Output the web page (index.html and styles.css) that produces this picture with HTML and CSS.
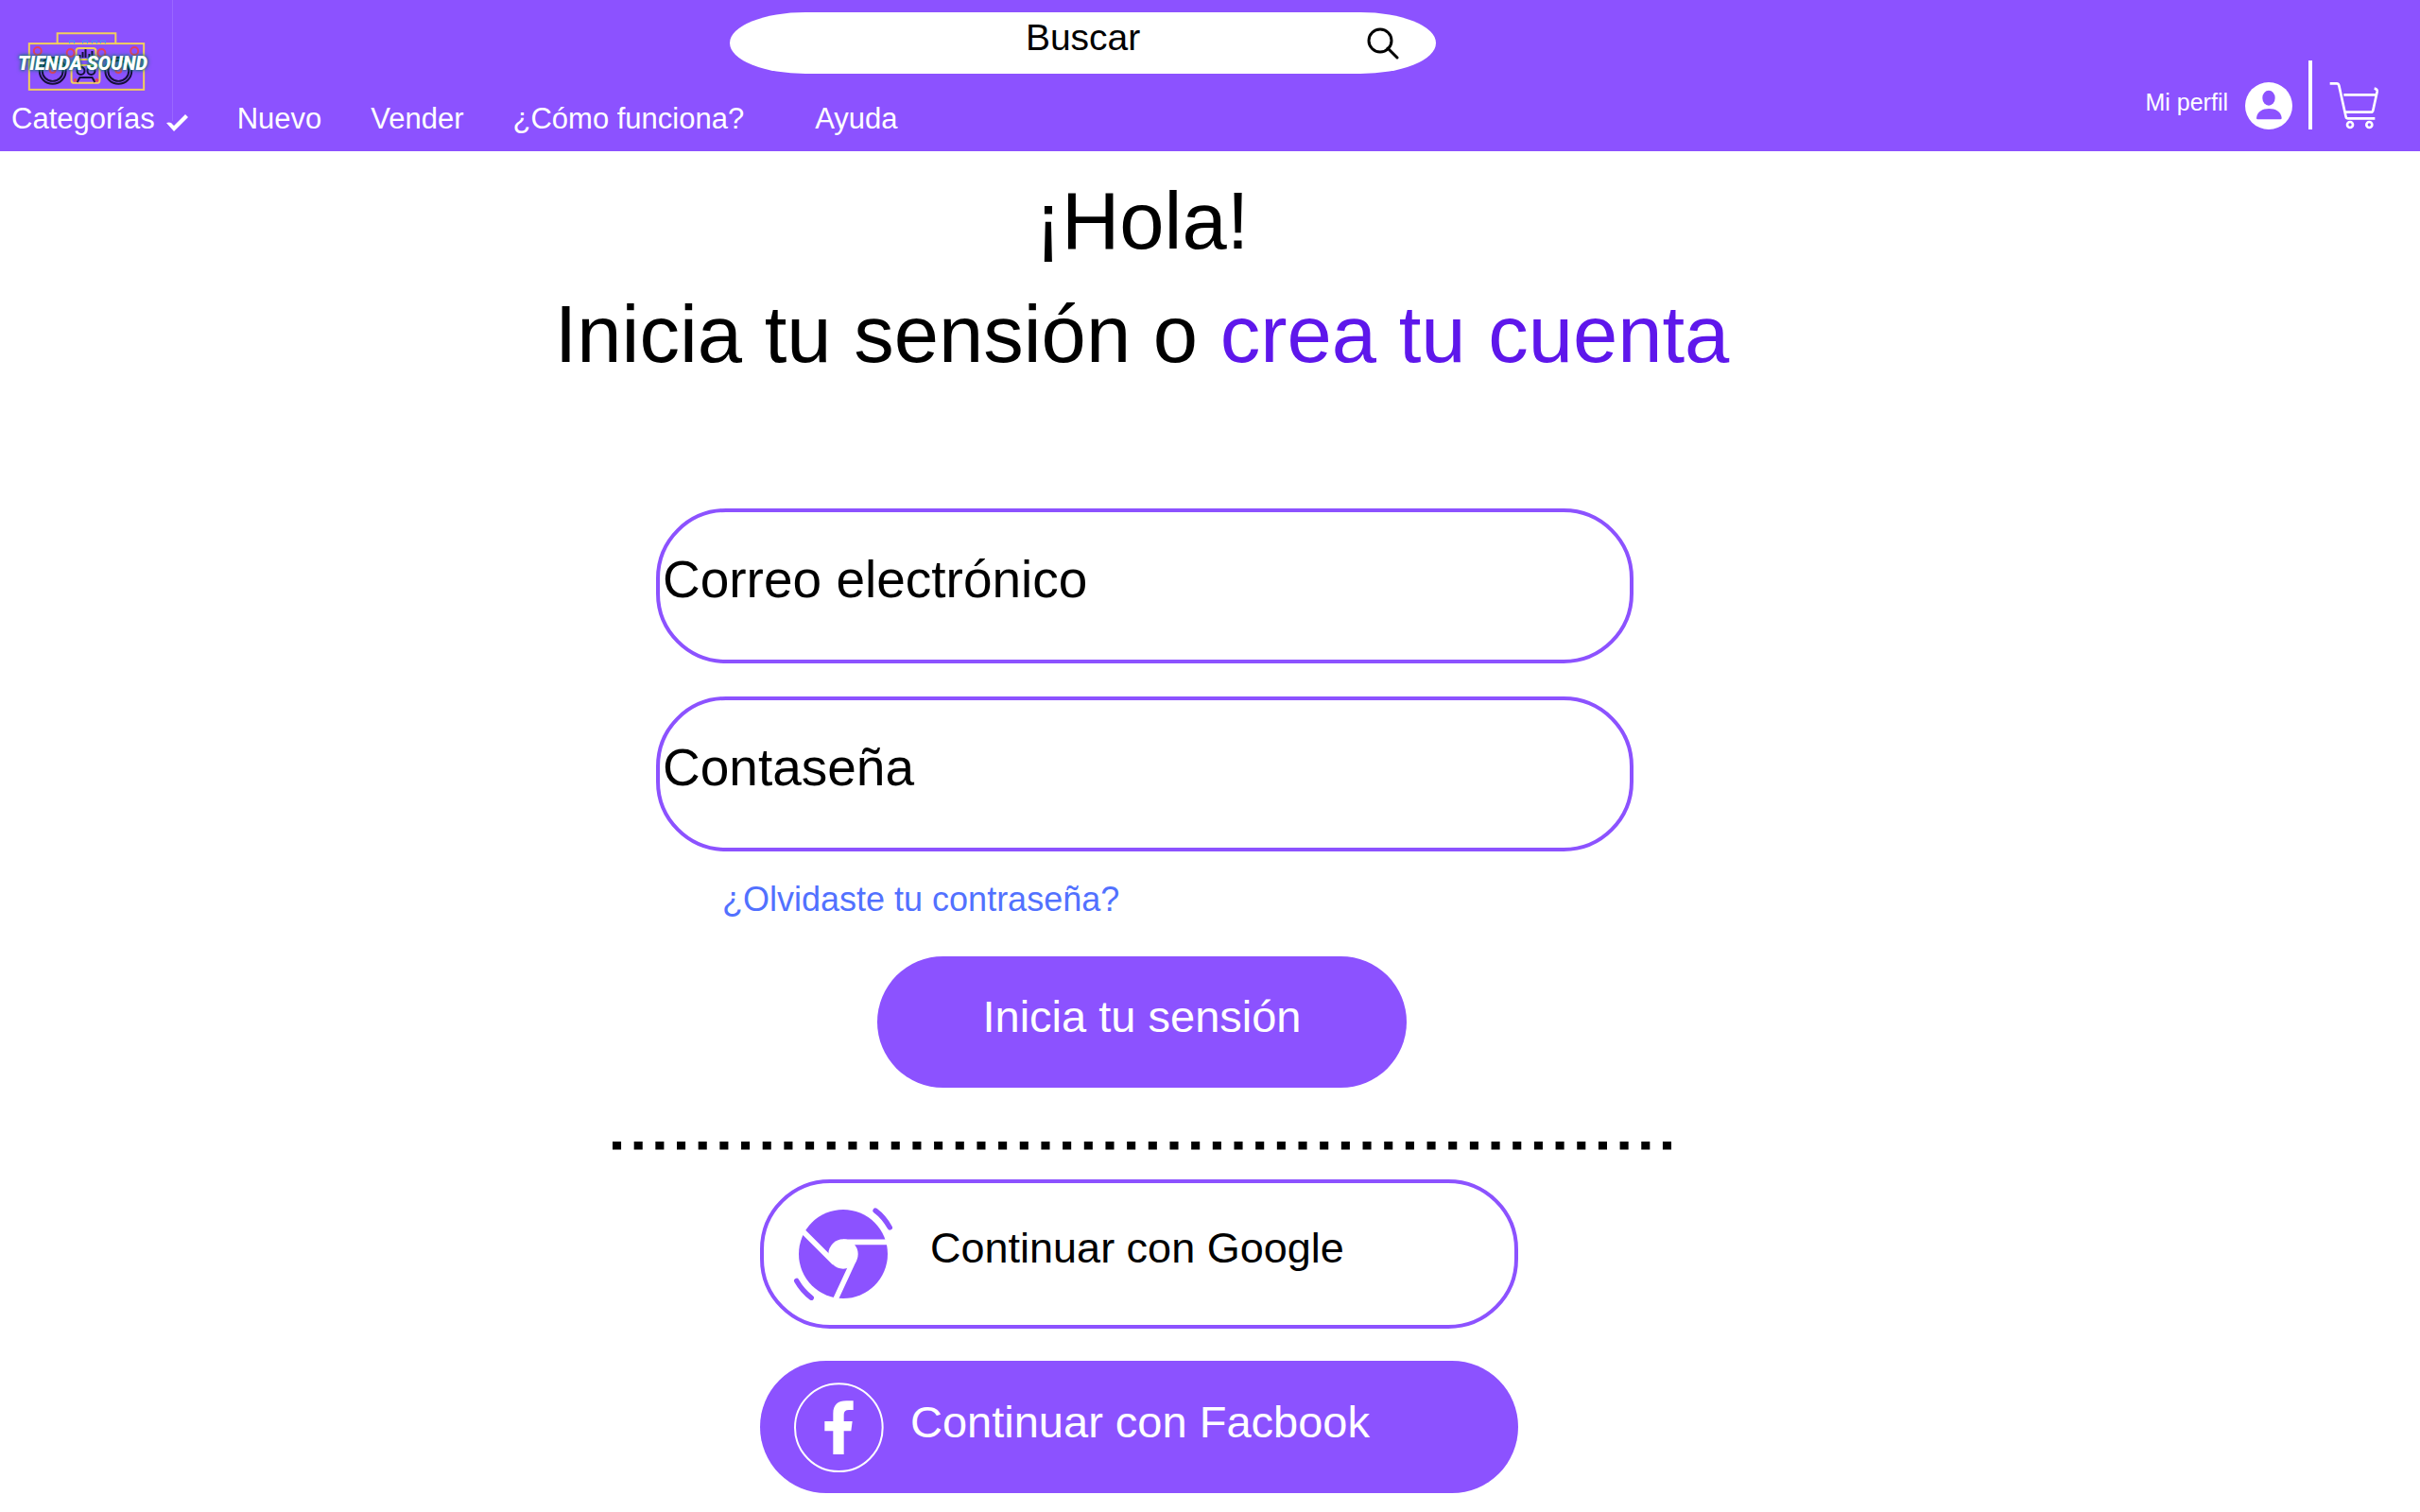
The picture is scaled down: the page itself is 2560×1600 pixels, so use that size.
FILE: index.html
```html
<!DOCTYPE html>
<html lang="es">
<head>
<meta charset="utf-8">
<meta name="viewport" content="width=device-width, initial-scale=1">
<title>Tienda Sound</title>
<link rel="stylesheet" href="styles.css">
</head>
<body>
<header class="header">
  <a class="logo" href="#">
    <svg class="logo-art" viewBox="0 0 183 128" role="img" aria-label="Tienda Sound">
      <g class="logo-frame">
        <path d="M61 46V35H123V46"/>
        <rect x="31" y="46" width="122" height="49"/>
        <rect x="81" y="51" width="21" height="12" rx="3"/>
        <rect x="76" y="69" width="30" height="19" rx="3"/>
      </g>
      <path class="logo-cyan" d="M74 46V43H79V46M88 46V43H93V46M98 46V43H103V46M107 46V43H112V46"/>
      <g class="logo-black">
        <circle cx="56" cy="75" r="14"/>
        <circle cx="126" cy="75" r="14"/>
        <circle cx="56" cy="75" r="11"/>
        <circle cx="126" cy="75" r="11"/>
        <circle cx="86" cy="75" r="4"/>
        <circle cx="97" cy="75" r="4"/>
        <path d="M82 87L85 82H98L101 87M85 61V58M88 61V55M91 61V52M95 61V57M98 61V54"/>
      </g>
      <g class="logo-red">
        <circle cx="40" cy="54" r="4"/>
        <circle cx="75" cy="56" r="4"/>
        <circle cx="108" cy="56" r="4"/>
        <circle cx="143" cy="54" r="4"/>
        <circle cx="56" cy="74" r="3"/>
        <circle cx="126" cy="74" r="3"/>
        <circle cx="80" cy="85" r="1"/>
        <circle cx="103" cy="85" r="1"/>
      </g>
      <text class="logo-text" x="88" y="74" text-anchor="middle">TIENDA SOUND</text>
    </svg>
  </a>

  <form class="search">
    <input class="search-input" type="search" placeholder="Buscar" aria-label="Buscar">
    <button class="search-button" type="submit" aria-label="Buscar">
      <svg class="search-icon" viewBox="0 0 34 34" aria-hidden="true">
        <circle cx="14" cy="14" r="12"/>
        <path d="M22 22L32 32"/>
      </svg>
    </button>
  </form>

  <nav class="nav">
    <a class="nav-link" href="#">Categorías
      <svg class="check" viewBox="0 0 23 18" aria-hidden="true"><path d="M0 9Q3 8 5 9L8 12L20 0L23 3L8 18Z"/></svg>
    </a>
    <a class="nav-link" href="#">Nuevo</a>
    <a class="nav-link" href="#">Vender</a>
    <a class="nav-link" href="#">¿Cómo funciona?</a>
    <a class="nav-link nav-help" href="#">Ayuda</a>
  </nav>

  <div class="account">
    <a class="profile" href="#">
      <span class="profile-name">Mi perfil</span>
      <svg class="avatar" viewBox="405 110 150 150" aria-hidden="true">
        <circle class="avatar-disc" cx="480" cy="185" r="75"/>
        <ellipse class="avatar-person" cx="480" cy="160" rx="20" ry="24"/>
        <path class="avatar-person" d="M441 224C443 203 460 194 481 194S519 203 521 224Q521 228 517 228H445Q441 228 441 224Z"/>
      </svg>
    </a>
    <a class="cart" href="#" aria-label="Carrito">
      <svg class="cart-icon" viewBox="673 108 156 153" aria-hidden="true">
        <path d="M675 115H697Q702 115 704 122L726 221Q727 226 733 226H818M719 151H822M726 206H805Q811 206 812 200L825 141Q826 133 816 131"/>
        <circle cx="739" cy="246" r="9"/>
        <circle cx="800" cy="246" r="9"/>
      </svg>
    </a>
  </div>
</header>

<main class="main">
  <div class="panel">
    <h1 class="title">¡Hola!<br>Inicia tu sensión o <a class="title-link" href="#">crea tu cuenta</a></h1>

    <form class="login" id="login">
      <div class="field">
        <label class="field-label" for="email">Correo electrónico</label>
        <input class="field-input" id="email" type="email">
      </div>
      <div class="field">
        <label class="field-label" for="password">Contaseña</label>
        <input class="field-input" id="password" type="password">
      </div>
      <a class="forgot" href="#">¿Olvidaste tu contraseña?</a>
    </form>
    <button class="submit" type="submit" form="login">Inicia tu sensión</button>

    <svg class="divider" aria-hidden="true"><line x1="0" y1="4" x2="100%" y2="4" pathLength="247"/></svg>

    <div class="providers">
      <button class="provider provider-google" type="button">
        <svg class="google-icon" viewBox="27 39 318 294" aria-hidden="true">
          <circle class="google-disc" cx="186" cy="186" r="141"/>
          <circle class="google-hub" cx="186" cy="186" r="47"/>
          <path class="google-gap" d="M186 148H340M158 214L50 106M221 202L157 340"/>
          <path class="google-wave" d="M288 48Q315 68 334 102M38 271Q56 303 85 325"/>
        </svg>
        <span class="provider-text">Continuar con Google</span>
      </button>
      <button class="provider provider-facebook" type="button">
        <svg class="facebook-icon" viewBox="29 36 285 285" aria-hidden="true">
          <circle class="facebook-ring" cx="171" cy="179" r="139"/>
          <path class="facebook-f" d="M217 94V123H203Q187 123 187 138V159H214L210 190H187V264H153V190H126V159H153V134C153 107 168 94 195 94Z"/>
        </svg>
        <span class="provider-text">Continuar con Facbook</span>
      </button>
    </div>
  </div>
</main>
</body>
</html>
```
FILE: styles.css
```css
:root {
  --purple: #8c52ff;
}

* {
  box-sizing: border-box;
}

body {
  margin: 0;
  background: #fff;
  color: #000;
  font-family: "Liberation Sans", Arial, sans-serif;
}

a {
  color: inherit;
  text-decoration: none;
}

button,
input {
  margin: 0;
  padding: 0;
  border: 0;
  background: none;
  color: inherit;
  font: inherit;
}

svg {
  display: block;
  flex: none;
}

input::placeholder {
  color: #000;
  opacity: 1;
}

/* Header */

.header {
  display: grid;
  grid-template-columns: 181fr 175fr 244fr;
  grid-template-rows: auto auto;
  row-gap: 30px;
  padding-bottom: 16px;
  background: var(--purple);
  color: #fff;
}

.logo {
  grid-area: 1 / 1 / 3 / 2;
  place-self: start;
  border-right: 1px solid #9a67ff;
}

.logo-art {
  width: 182px;
  height: 128px;
  fill: none;
}

.logo-frame {
  stroke: #f2cf5b;
  stroke-width: 2;
}

.logo-cyan {
  stroke: #3fa0f5;
}

.logo-black {
  stroke: #150f38;
  stroke-width: 2;
}

.logo-red {
  stroke: #e2425f;
  stroke-width: 2;
}

.logo-text {
  fill: #fff;
  font: italic 900 20px Roboto, "Liberation Sans", sans-serif;
  text-shadow: 0 0 3px #067a5c, 0 0 5px #067a5c;
}

.search {
  grid-area: 1 / 2;
  display: flex;
  align-items: center;
  height: 65px;
  margin-top: 13px;
  padding: 0 39px 0 73px;
  border-radius: 80px / 50%;
  background: #fff;
  color: #000;
}

.search-input {
  flex: 1;
  min-width: 0;
  height: 100%;
  padding-bottom: 12px;
  outline: 0;
  font-size: 39px;
  text-align: center;
}

.search-input::-webkit-search-cancel-button {
  display: none;
}

.search-icon {
  width: 34px;
  height: 34px;
  fill: none;
  stroke: #000;
  stroke-width: 3;
  stroke-linecap: round;
}

.nav {
  grid-area: 2 / 1 / 3 / 3;
  display: flex;
  gap: 52px;
  padding-left: 12px;
  font-size: 31px;
  line-height: 36px;
  white-space: nowrap;
}

.nav-link {
  display: flex;
  align-items: flex-end;
  gap: 12px;
}

.nav-help {
  margin-left: 23px;
}

.check {
  width: 23px;
  height: 18px;
  margin-bottom: 5px;
  fill: #fff;
}

.account {
  grid-area: 1 / 3 / 3 / 4;
  display: flex;
  align-items: flex-end;
  justify-content: flex-end;
  padding: 0 44px 7px 0;
}

.profile {
  display: flex;
  align-items: center;
  gap: 18px;
}

.profile-name {
  padding-bottom: 8px;
  font-size: 25px;
  line-height: 28px;
}

.avatar {
  width: 50px;
  height: 50px;
}

.avatar-disc {
  fill: #fff;
}

.avatar-person {
  fill: var(--purple);
}

.cart {
  display: flex;
  align-items: flex-end;
  height: 73px;
  margin-left: 17px;
  padding-left: 18px;
  border-left: 4px solid #fff;
}

.cart-icon {
  width: 52px;
  height: 51px;
  fill: none;
  stroke: #fff;
  stroke-width: 8;
}

/* Sign-in panel */

.main {
  padding: 14px 144px 20px 0;
}

.panel {
  display: flex;
  flex-direction: column;
  align-items: center;
  max-width: 1120px;
  margin: 0 auto;
}

.title {
  margin: 0 -80px;
  font-size: 85px;
  font-weight: 400;
  line-height: 120px;
  text-align: center;
}

.title-link {
  color: #5e17eb;
}

.login {
  display: flex;
  flex-direction: column;
  align-self: stretch;
  gap: 35px;
  padding: 124px 40px 0 46px;
}

.field {
  display: flex;
  align-items: center;
  height: 164px;
  padding: 0 40px 14px 3px;
  border: 4px solid var(--purple);
  border-radius: 74px;
  font-size: 55px;
}

.field-input {
  flex: 1;
  min-width: 0;
  height: 100%;
  margin-left: 16px;
  outline: 0;
}

.forgot {
  align-self: flex-start;
  padding-left: 70px;
  color: #5271ff;
  font-size: 36px;
  line-height: 32px;
}

.submit {
  width: 50%;
  height: 139px;
  margin-top: 44px;
  padding-bottom: 12px;
  border-radius: 70px;
  background: var(--purple);
  color: #fff;
  font-size: 47px;
}

.divider {
  width: 100%;
  height: 9px;
  margin: 57px 0 31px;
  stroke: #000;
  stroke-width: 9;
  stroke-dasharray: 2 3;
}

.providers {
  display: flex;
  flex-direction: column;
  gap: 34px;
  width: 802px;
  max-width: 100%;
  margin-right: 6px;
}

.provider {
  display: flex;
  align-items: center;
  border-radius: 74px;
  text-align: left;
}

.provider-text {
  padding-bottom: 12px;
}

.provider-google {
  gap: 39px;
  height: 158px;
  padding-left: 31px;
  border: 4px solid var(--purple);
  font-size: 45px;
}

.google-icon {
  width: 106px;
  height: 98px;
}

.google-disc {
  fill: var(--purple);
}

.google-hub {
  fill: #fff;
}

.google-gap {
  fill: none;
  stroke: #fff;
  stroke-width: 17;
}

.google-wave {
  fill: none;
  stroke: var(--purple);
  stroke-width: 16;
  stroke-linecap: round;
}

.provider-facebook {
  gap: 28px;
  height: 140px;
  padding-left: 36px;
  background: var(--purple);
  color: #fff;
  font-size: 47px;
}

.facebook-icon {
  width: 95px;
  height: 95px;
}

.facebook-ring {
  fill: none;
  stroke: #fff;
  stroke-width: 6;
}

.facebook-f {
  fill: #fff;
}
```
